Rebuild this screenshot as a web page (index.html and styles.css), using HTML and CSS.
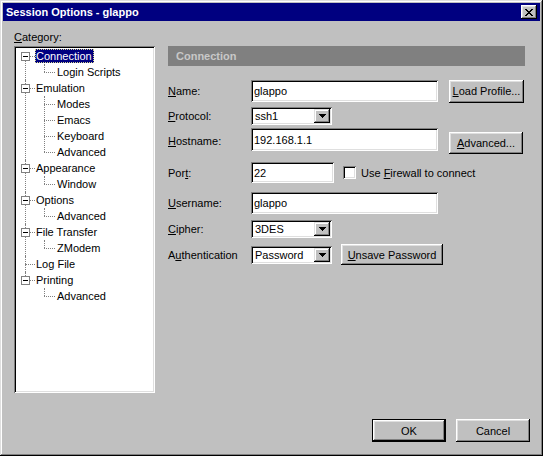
FILE: index.html
```html
<!DOCTYPE html>
<html lang="en">
  <head>
    <meta charset="UTF-8">
    <title>Session Options - glappo</title>
    <link rel="stylesheet" href="styles.css">
  </head>
  <body>
    <div class="window">
      <div class="titlebar">
        <span class="title">Session Options - glappo</span>
        <span class="close">
          <svg width="8" height="7" viewBox="0 0 8 7" shape-rendering="crispEdges">
            <path d="M0 0h2v1h-2zM6 0h2v1h-2zM1 1h2v1h-2zM5 1h2v1h-2zM2 2h4v1h-4zM3 3h2v1h-2zM2 4h4v1h-4zM1 5h2v1h-2zM5 5h2v1h-2zM0 6h2v1h-2zM6 6h2v1h-2z" fill="#000"/>
          </svg>
        </span>
      </div>

      <div class="content">
        <div class="category">
          <div class="cat-label"><u>C</u>ategory:</div>
          <ul class="tree">
            <li>
              <div class="item"><span class="box"></span><span class="label selected">Connection</span></div>
              <ul>
                <li class="item"><span class="label">Login Scripts</span></li>
              </ul>
            </li>
            <li>
              <div class="item"><span class="box"></span><span class="label">Emulation</span></div>
              <ul>
                <li class="item"><span class="label">Modes</span></li>
                <li class="item"><span class="label">Emacs</span></li>
                <li class="item"><span class="label">Keyboard</span></li>
                <li class="item"><span class="label">Advanced</span></li>
              </ul>
            </li>
            <li>
              <div class="item"><span class="box"></span><span class="label">Appearance</span></div>
              <ul>
                <li class="item"><span class="label">Window</span></li>
              </ul>
            </li>
            <li>
              <div class="item"><span class="box"></span><span class="label">Options</span></div>
              <ul>
                <li class="item"><span class="label">Advanced</span></li>
              </ul>
            </li>
            <li>
              <div class="item"><span class="box"></span><span class="label">File Transfer</span></div>
              <ul>
                <li class="item"><span class="label">ZModem</span></li>
              </ul>
            </li>
            <li>
              <div class="item"><span class="label">Log File</span></div>
            </li>
            <li>
              <div class="item"><span class="box"></span><span class="label">Printing</span></div>
              <ul>
                <li class="item"><span class="label">Advanced</span></li>
              </ul>
            </li>
          </ul>
        </div>

        <div class="panel">
          <div class="panel-head">Connection</div>
          <div class="form">
            <div class="row r-name">
              <span class="lbl"><u>N</u>ame:</span>
              <div class="field wide">glappo</div>
              <div class="btn side"><span><u>L</u>oad Profile...</span></div>
            </div>
            <div class="row r-proto">
              <span class="lbl"><u>P</u>rotocol:</span>
              <div class="combo"><span class="val">ssh1</span><span class="drop"><svg width="7" height="4" viewBox="0 0 7 4" shape-rendering="crispEdges"><path d="M0 0h7v1h-7zM1 1h5v1h-5zM2 2h3v1h-3zM3 3h1v1h-1z" fill="#000"/></svg></span></div>
            </div>
            <div class="row r-host">
              <span class="lbl"><u>H</u>ostname:</span>
              <div class="field wide top">192.168.1.1</div>
              <div class="btn side bottom"><span><u>A</u>dvanced...</span></div>
            </div>
            <div class="row r-port">
              <span class="lbl">Por<u>t</u>:</span>
              <div class="field short">22</div>
              <span class="check"></span>
              <span class="check-text">Use <u>F</u>irewall to connect</span>
            </div>
            <div class="row r-user">
              <span class="lbl"><u>U</u>sername:</span>
              <div class="field wide">glappo</div>
            </div>
            <div class="row r-cipher">
              <span class="lbl"><u>C</u>ipher:</span>
              <div class="combo"><span class="val">3DES</span><span class="drop"><svg width="7" height="4" viewBox="0 0 7 4" shape-rendering="crispEdges"><path d="M0 0h7v1h-7zM1 1h5v1h-5zM2 2h3v1h-3zM3 3h1v1h-1z" fill="#000"/></svg></span></div>
            </div>
            <div class="row r-auth">
              <span class="lbl">A<u>u</u>thentication</span>
              <div class="combo"><span class="val">Password</span><span class="drop"><svg width="7" height="4" viewBox="0 0 7 4" shape-rendering="crispEdges"><path d="M0 0h7v1h-7zM1 1h5v1h-5zM2 2h3v1h-3zM3 3h1v1h-1z" fill="#000"/></svg></span></div>
              <div class="btn unsave"><span><u>U</u>nsave Password</span></div>
            </div>
          </div>
        </div>
      </div>

      <div class="footer">
        <div class="btn default">OK</div>
        <div class="btn">Cancel</div>
      </div>
    </div>
  </body>
</html>
```

FILE: styles.css
```css
body{
  margin: 0;
  background: #c0c0c0;
  font: 11px "Liberation Sans", Arial, sans-serif;
  color: #000;
}

u{
  text-underline-offset: 1px;
}

.window{
  width: 543px;
  height: 456px;
  box-sizing: border-box;
  padding: 3px;
  background: #c0c0c0;
  box-shadow: inset -1px -1px #000, inset 1px 1px #dfdfdf,
              inset -2px -2px #808080, inset 2px 2px #fff;
}

.titlebar{
  height: 18px;
  background: #000080;
  color: #fff;
  display: flex;
  align-items: center;
  justify-content: space-between;
  padding: 0 3px 0 3px;
}

.title{
  font-weight: bold;
}

.close{
  width: 16px;
  height: 14px;
  box-sizing: border-box;
  background: #c0c0c0;
  display: flex;
  align-items: center;
  justify-content: center;
  box-shadow: inset -1px -1px #000, inset 1px 1px #fff,
              inset -2px -2px #808080, inset 2px 2px #dfdfdf;
}

.content{
  display: flex;
  padding: 10px 0 0 11px;
}

/* left: category tree */
.category{
  width: 141px;
}

.cat-label{
  height: 15px;
  line-height: 13px;
}

.tree{
  list-style: none;
  margin: 0;
  padding: 2px 0 0 0;
  height: 347px;
  box-sizing: border-box;
  background: #fff;
  box-shadow: inset 1px 1px #808080, inset -1px -1px #fff,
              inset 2px 2px #000, inset -2px -2px #dfdfdf;
}

.tree ul{
  list-style: none;
  margin: 0;
  padding: 0;
  position: relative;
}

.tree > li{
  position: relative;
}

.tree > li::before{
  content: '';
  position: absolute;
  left: 11px;
  top: 0;
  bottom: 0;
  border-left: 1px dotted #808080;
}

.tree > li:first-child::before{
  top: 8px;
}

.tree > li:last-child::before{
  bottom: auto;
  height: 8px;
}

.item{
  position: relative;
  height: 16px;
  white-space: nowrap;
}

.tree > li > .item::after{
  content: '';
  position: absolute;
  left: 11px;
  top: 8px;
  width: 10px;
  border-top: 1px dotted #808080;
}

.tree ul::before{
  content: '';
  position: absolute;
  left: 30px;
  top: 0;
  height: calc(100% - 8px);
  border-left: 1px dotted #808080;
}

.tree ul .item::after{
  content: '';
  position: absolute;
  left: 30px;
  top: 8px;
  width: 11px;
  border-top: 1px dotted #808080;
}

.box{
  position: absolute;
  z-index: 1;
  left: 7px;
  top: 4px;
  width: 9px;
  height: 9px;
  box-sizing: border-box;
  border: 1px solid #808080;
  background: #fff;
}

.box::after{
  content: '';
  position: absolute;
  left: 1px;
  top: 3px;
  width: 5px;
  height: 1px;
  background: #000;
}

.label{
  display: inline-block;
  height: 14px;
  line-height: 14px;
  margin: 1px 0 0 21px;
  padding: 0 2px 0 1px;
  vertical-align: top;
}

.tree ul .label{
  margin-left: 41px;
  padding-left: 2px;
}

.label.selected{
  background: #000080;
  color: #fff;
  outline: 1px dotted #d8d890;
  outline-offset: -1px;
}

/* right: connection panel */
.panel{
  margin-left: 13px;
  width: 357px;
  padding-top: 15px;
}

.panel-head{
  height: 20px;
  line-height: 20px;
  background: #808080;
  color: #c8c8c8;
  font-weight: bold;
  padding-left: 8px;
}

.form{
  padding-top: 13px;
}

.row{
  display: flex;
  align-items: center;
}

.lbl{
  width: 83px;
  flex: none;
}

.field{
  box-sizing: border-box;
  height: 22px;
  background: #fff;
  padding-left: 3px;
  display: flex;
  align-items: center;
  box-shadow: inset 1px 1px #808080, inset -1px -1px #fff,
              inset 2px 2px #000, inset -2px -2px #dfdfdf;
}

.field.wide{ width: 187px; }
.field.short{ width: 83px; height: 21px; }
.field.top{ align-self: flex-start; height: 23px; }

.combo{
  box-sizing: border-box;
  width: 81px;
  height: 18px;
  background: #fff;
  padding: 2px;
  display: flex;
  box-shadow: inset 1px 1px #808080, inset -1px -1px #fff,
              inset 2px 2px #000, inset -2px -2px #dfdfdf;
}

.combo .val{
  flex: 1;
  padding-left: 2px;
  line-height: 14px;
}

.drop{
  width: 16px;
  height: 14px;
  box-sizing: border-box;
  background: #c0c0c0;
  display: flex;
  align-items: center;
  justify-content: center;
  box-shadow: inset -1px -1px #000, inset 1px 1px #dfdfdf,
              inset -2px -2px #808080, inset 2px 2px #fff;
}

.btn{
  box-sizing: border-box;
  height: 23px;
  width: 74px;
  display: flex;
  align-items: center;
  justify-content: center;
  background: #c0c0c0;
  box-shadow: inset -1px -1px #000, inset 1px 1px #fff,
              inset -2px -2px #808080, inset 2px 2px #dfdfdf;
}

.btn.side{
  margin-left: 11px;
  width: 75px;
}

.btn.bottom{
  align-self: flex-end;
  height: 22px;
  width: 74px;
}

.btn.unsave{
  margin-left: 9px;
  width: 102px;
  height: 21px;
}

.r-name{ height: 24px; }
.r-proto{ height: 18px; margin-top: 4px; }
.r-host{ height: 26px; margin-top: 3px; }
.r-port{ height: 21px; margin-top: 8px; }
.r-user{ height: 21px; margin-top: 9px; }
.r-cipher{ height: 18px; margin-top: 7px; }
.r-auth{ height: 21px; margin-top: 6px; }

.check{
  width: 13px;
  height: 13px;
  box-sizing: border-box;
  margin-left: 9px;
  background: #fff;
  box-shadow: inset 1px 1px #808080, inset -1px -1px #fff,
              inset 2px 2px #000, inset -2px -2px #dfdfdf;
}

.check-text{
  margin-left: 5px;
}

/* OK / Cancel */
.footer{
  display: flex;
  justify-content: flex-end;
  gap: 10px;
  margin-top: 26px;
  padding-right: 10px;
}

.btn.default{
  border: 1px solid #000;
}
```
